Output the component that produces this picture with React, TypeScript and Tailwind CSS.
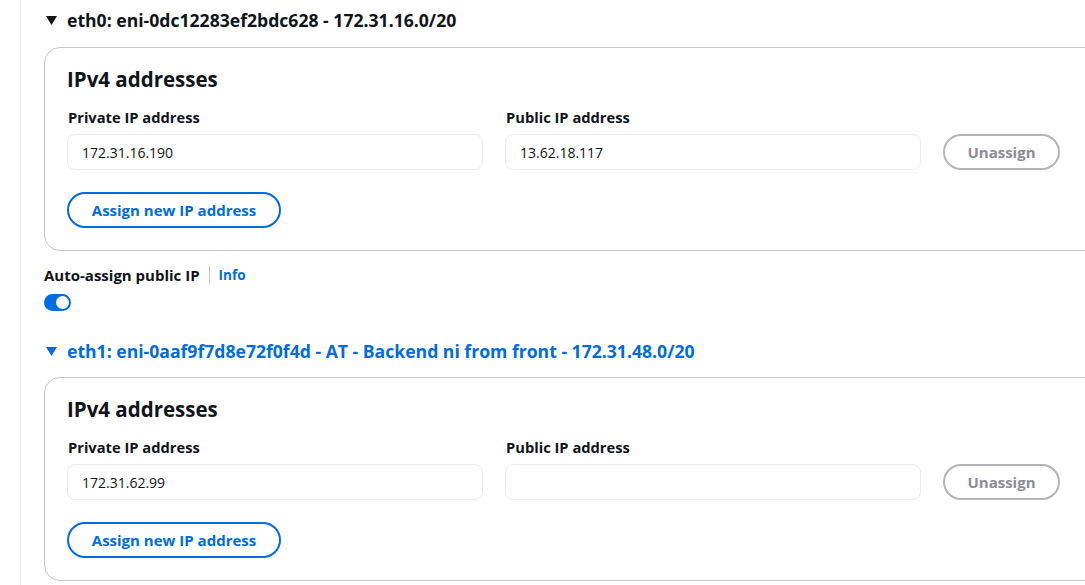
const font = { fontFamily: '"Open Sans", "Noto Sans", sans-serif' };

type Iface = {
  title: string;
  active: boolean;
  privateIp: string;
  publicIp: string;
};

const IpCard = ({ privateIp, publicIp }: { privateIp: string; publicIp: string }) => (
  <div className="w-[1060px] rounded-2xl border border-[#c6c6cd] pl-[22px] pt-[19px] pb-[22px]">
    <h3 className="text-[20.5px] leading-6 font-bold text-[#0f141a]">IPv4 addresses</h3>
    <div className="mt-[17px] grid grid-cols-[416px_416px_117px] gap-x-[22px]">
      <div className="pl-px text-[14.7px] leading-[18px] font-bold text-[#0f141a]">Private IP address</div>
      <div className="pl-px text-[14.7px] leading-[18px] font-bold text-[#0f141a]">Public IP address</div>
      <div />
      <div className="mt-2 h-9 rounded-lg border border-[#e9ebed] px-[14px] flex items-center text-[14px] text-[#0f141a]">
        {privateIp}
      </div>
      <div className="mt-2 h-9 rounded-lg border border-[#e9ebed] px-[14px] flex items-center text-[14px] text-[#0f141a]">
        {publicIp}
      </div>
      <button className="mt-2 h-9 rounded-full border-2 border-[#b4b4bb] text-[15px] font-bold text-[#8c8c94]">
        Unassign
      </button>
    </div>
    <button className="mt-[22px] h-9 w-[214px] rounded-full border-2 border-[#006ce0] text-[15px] font-bold text-[#006ce0]">
      Assign new IP address
    </button>
  </div>
);

const Header = ({ title, active }: { title: string; active: boolean }) => (
  <div
    className={`flex items-center gap-[10px] text-[17.6px] leading-5 font-bold ${
      active ? 'text-[#006ce0]' : 'text-[#0f141a]'
    }`}
  >
    <svg width="11" height="9" viewBox="0 0 11 9" className="ml-[2px]">
      <path d="M0 0h11L5.5 9z" fill="currentColor" />
    </svg>
    <span>{title}</span>
  </div>
);

export default function App() {
  const ifaces: Iface[] = [
    { title: 'eth0: eni-0dc12283ef2bdc628 - 172.31.16.0/20', active: false, privateIp: '172.31.16.190', publicIp: '13.62.18.117' },
    { title: 'eth1: eni-0aaf9f7d8e72f0f4d - AT - Backend ni from front - 172.31.48.0/20', active: true, privateIp: '172.31.62.99', publicIp: '' },
  ];

  return (
    <div className="flex h-[585px] w-full overflow-hidden bg-white" style={font}>
      <div className="w-5 shrink-0" />
      <div className="w-px shrink-0 bg-[#e9ebed]" />
      <div className="flex-1 pl-[23px] pt-[10px]">
        <Header title={ifaces[0].title} active={ifaces[0].active} />
        <div className="mt-[17px]">
          <IpCard privateIp={ifaces[0].privateIp} publicIp={ifaces[0].publicIp} />
        </div>
        <div className="mt-[15px] flex items-center text-[15px] leading-[18px] font-bold text-[#0f141a]">
          <span>Auto-assign public IP</span>
          <span className="mx-[9px] h-[18px] w-px bg-[#c6c6cd]" />
          <a className="text-[13.5px] text-[#006ce0]">Info</a>
        </div>
        <div className="mt-[10px] flex h-[17px] w-[27px] items-center justify-end rounded-full bg-[#006ce0] pr-[2px]">
          <div className="h-[13px] w-[13px] rounded-full bg-white" />
        </div>
        <div className="mt-[30px]">
          <Header title={ifaces[1].title} active={ifaces[1].active} />
        </div>
        <div className="mt-4">
          <IpCard privateIp={ifaces[1].privateIp} publicIp={ifaces[1].publicIp} />
        </div>
      </div>
    </div>
  );
}
